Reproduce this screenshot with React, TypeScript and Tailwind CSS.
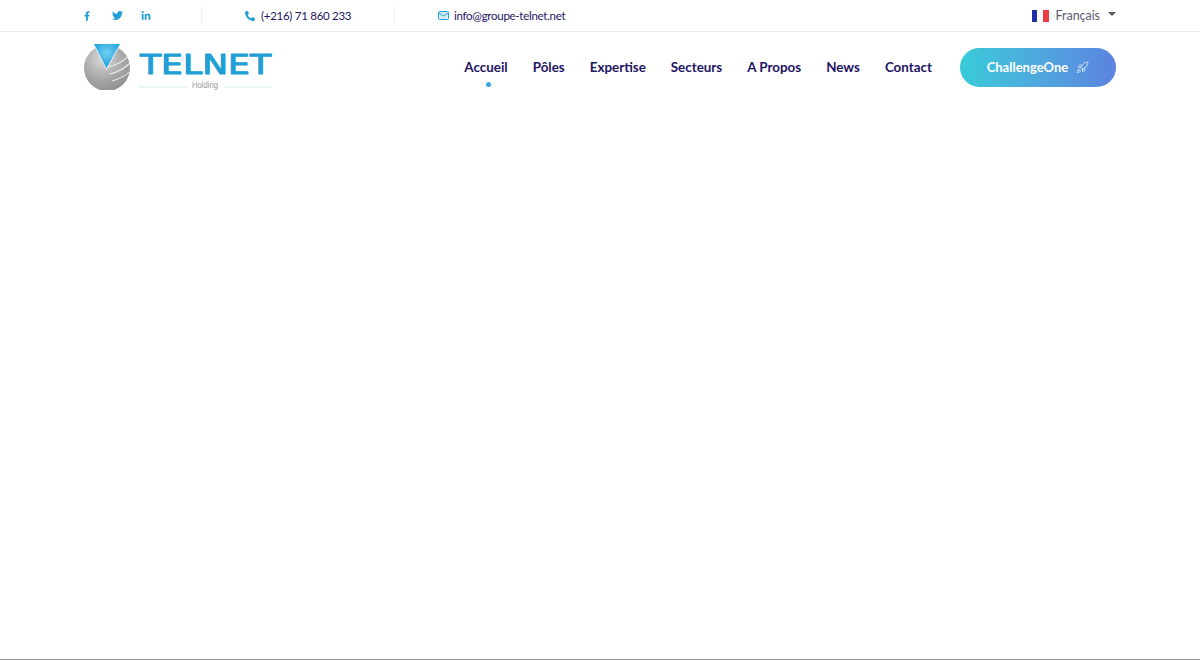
import React from 'react';
import { FaFacebookF, FaTwitter, FaLinkedinIn, FaPhoneAlt } from 'react-icons/fa';
import { Rocket } from 'lucide-react';

const navLinks = ['Accueil', 'Pôles', 'Expertise', 'Secteurs', 'A Propos', 'News', 'Contact'];

const Logo = () => (
  <svg width="190" height="50" viewBox="0 0 190 50" className="mb-[5px] block">
    <defs>
      <radialGradient id="ball" cx="0.4" cy="0.3" r="0.8">
        <stop offset="0" stopColor="#d9d9d9" />
        <stop offset="0.55" stopColor="#a8a8a8" />
        <stop offset="1" stopColor="#8a8a8a" />
      </radialGradient>
      <radialGradient id="tri" cx="0.5" cy="0.35" r="0.6">
        <stop offset="0" stopColor="#6fd0f2" />
        <stop offset="1" stopColor="#1f9fdc" />
      </radialGradient>
    </defs>
    <circle cx="23" cy="28" r="23" fill="url(#ball)" />
    {/* swooshes on the ball */}
    <path d="M24 27 C33 25 40 21 44 16" stroke="#eee" strokeWidth="1.2" fill="none" />
    <path d="M26 34 C34 32 41 28 46 23" stroke="#eee" strokeWidth="1.1" fill="none" />
    <path d="M28 41 C35 39 41 36 45 32" stroke="#eee" strokeWidth="1" fill="none" />
    <path d="M9 3.5 H37 L22.5 30 Z" fill="#fff" />
    <path d="M10 4 H36 L22.5 28.5 Z" fill="url(#tri)" />
    <text
      x="56"
      y="34"
      fontFamily="'DejaVu Sans', sans-serif"
      fontSize="26"
      textLength="131"
      lengthAdjust="spacingAndGlyphs"
      fill="#1f9fd6"
      stroke="#1f9fd6"
      strokeWidth="1"
      strokeLinejoin="round"
    >
      TELNET
    </text>
    <path d="M54 47 H103 M140 47 H188" stroke="#d3ebf0" strokeWidth="1" />
    <text
      x="108"
      y="48"
      fontFamily="'Liberation Sans', sans-serif"
      fontSize="8.5"
      textLength="26"
      lengthAdjust="spacingAndGlyphs"
      fill="#999"
    >
      Holding
    </text>
  </svg>
);

const MailIcon = () => (
  <svg width="11" height="11" viewBox="0 0 11 11" className="block">
    <rect x="0.5" y="1.5" width="10" height="8" rx="1" fill="#d4eef8" stroke="#1f9fd6" />
    <path d="M1 3 L5.5 6 L10 3" fill="none" stroke="#1f9fd6" />
  </svg>
);

const FrenchFlag = () => (
  <span className="mt-px flex h-3 w-[17px]">
    <span className="flex-1 bg-[#1f2f9f]" />
    <span className="flex-1 bg-white" />
    <span className="flex-1 bg-[#ee3b45]" />
  </span>
);

const App = () => {
  return (
    <div className="flex h-[660px] flex-col bg-white font-['Lato',sans-serif]">
      {/* Top bar */}
      <div className="h-8 border-b border-[#ececec]">
        <div className="mx-auto flex h-full w-[1032px] items-center">
          <div className="flex w-[117px] items-center text-[#1f9fd6]">
            <span className="flex w-[6px] justify-center"><FaFacebookF className="h-[10px] w-[10px]" /></span>
            <span className="ml-[22px] flex w-[11px]"><FaTwitter className="h-[11px] w-[11px]" /></span>
            <span className="ml-[18px] flex w-[10px]"><FaLinkedinIn className="h-[10px] w-[10px]" /></span>
          </div>
          <div className="h-5 w-px bg-[#efefef]" />
          <div className="ml-[43px] flex w-[149px] items-center text-[#1f9fd6]">
            <FaPhoneAlt className="h-[10px] w-[10px]" />
            <span className="ml-[6px] text-[11.5px] tracking-[-0.28px] text-[#1e1463]">(+216) 71 860 233</span>
          </div>
          <div className="h-5 w-px bg-[#efefef]" />
          <div className="ml-[43px] flex items-center">
            <MailIcon />
            <span className="ml-[5px] text-[11.5px] tracking-[-0.28px] text-[#1e1463]">info@groupe-telnet.net</span>
          </div>
          <div className="ml-auto flex items-center">
            <FrenchFlag />
            <span className="ml-[7px] pt-px text-[12.4px] text-[#5a5a70]">Français</span>
            <span className="-mt-[2px] ml-2 h-0 w-0 border-x-4 border-t-4 border-x-transparent border-t-[#555]" />
          </div>
        </div>
      </div>

      {/* Main nav */}
      <div className="mx-auto flex h-[71px] w-[1032px] items-center justify-between">
        <Logo />
        <div className="flex items-center">
          <nav className="flex items-center gap-[25px]">
            {navLinks.map((link, i) => (
              <a key={link} className="relative text-[13.4px] leading-[21px] font-bold text-[#1e1463]">
                {link}
                {i === 0 && (
                  <span className="absolute -bottom-[9px] left-[22px] h-[5px] w-[5px] rounded-full bg-[#3aa8e0]" />
                )}
              </a>
            ))}
          </nav>
          <button className="ml-7 flex h-[39px] w-[156px] items-center justify-center gap-2 rounded-full bg-gradient-to-r from-[#37cbd9] to-[#5a83e0] text-[13px] font-bold text-white">
            ChallengeOne
            <Rocket className="h-[13px] w-[13px] text-white/80" strokeWidth={1.5} />
          </button>
        </div>
      </div>

      <div className="flex-1" />
      <div className="h-px bg-[#999]" />
    </div>
  );
};

export default App;
